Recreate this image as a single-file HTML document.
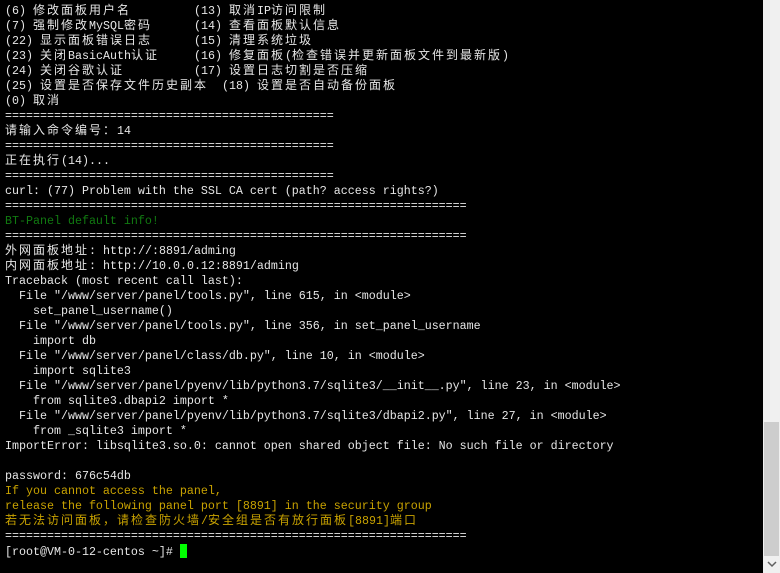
<!DOCTYPE html>
<html><head><meta charset="utf-8"><style>
html,body{margin:0;padding:0;background:#000;width:780px;height:573px;overflow:hidden}
pre{position:absolute;left:5px;top:4px;margin:0;font-family:"Liberation Mono",monospace;font-size:11.67px;line-height:15px;color:#e6e6e6;white-space:pre}
.c{font-family:"Noto Sans CJK SC","WenQuanYi Zen Hei",sans-serif;font-size:12px;letter-spacing:2px;line-height:0}
.g{color:#117a11}
.y{color:#c8a200}
.cur{display:inline-block;width:7px;height:14px;background:#00ff00;vertical-align:-3px}
#track{position:absolute;left:763px;top:0;width:17px;height:573px;background:#f0f0f0}
#thumb{position:absolute;left:764px;top:422px;width:15px;height:134px;background:#cdcdcd}
#arr{position:absolute;left:765px;top:558px;width:14px;height:12px}
</style></head><body>
<pre>(6) <span class="c">修改面板用户名</span>         (13) <span class="c">取消</span>IP<span class="c">访问限制</span>
(7) <span class="c">强制修改</span>MySQL<span class="c">密码</span>      (14) <span class="c">查看面板默认信息</span>
(22) <span class="c">显示面板错误日志</span>      (15) <span class="c">清理系统垃圾</span>
(23) <span class="c">关闭</span>BasicAuth<span class="c">认证</span>     (16) <span class="c">修复面板</span>(<span class="c">检查错误并更新面板文件到最新版</span>)
(24) <span class="c">关闭谷歌认证</span>          (17) <span class="c">设置日志切割是否压缩</span>
(25) <span class="c">设置是否保存文件历史副本</span>  (18) <span class="c">设置是否自动备份面板</span>
(0) <span class="c">取消</span>
===============================================
<span class="c">请输入命令编号：</span>14
===============================================
<span class="c">正在执行</span>(14)...
===============================================
curl: (77) Problem with the SSL CA cert (path? access rights?)
==================================================================
<span class="g">BT-Panel default info!</span>
==================================================================
<span class="c">外网面板地址</span>: http://:8891/adming
<span class="c">内网面板地址</span>: http://10.0.0.12:8891/adming
Traceback (most recent call last):
  File "/www/server/panel/tools.py", line 615, in &lt;module&gt;
    set_panel_username()
  File "/www/server/panel/tools.py", line 356, in set_panel_username
    import db
  File "/www/server/panel/class/db.py", line 10, in &lt;module&gt;
    import sqlite3
  File "/www/server/panel/pyenv/lib/python3.7/sqlite3/__init__.py", line 23, in &lt;module&gt;
    from sqlite3.dbapi2 import *
  File "/www/server/panel/pyenv/lib/python3.7/sqlite3/dbapi2.py", line 27, in &lt;module&gt;
    from _sqlite3 import *
ImportError: libsqlite3.so.0: cannot open shared object file: No such file or directory

password: 676c54db
<span class="y">If you cannot access the panel,</span>
<span class="y">release the following panel port [8891] in the security group</span>
<span class="y"><span class="c">若无法访问面板，请检查防火墙</span>/<span class="c">安全组是否有放行面板</span>[8891]<span class="c">端口</span></span>
==================================================================
[root@VM-0-12-centos ~]# <span class="cur"></span></pre>
<div id="track"></div><div id="thumb"></div>
<svg id="arr" viewBox="0 0 14 12"><path d="M3 4 L7 8 L11 4" fill="none" stroke="#606060" stroke-width="1.5"/></svg>
</body></html>
